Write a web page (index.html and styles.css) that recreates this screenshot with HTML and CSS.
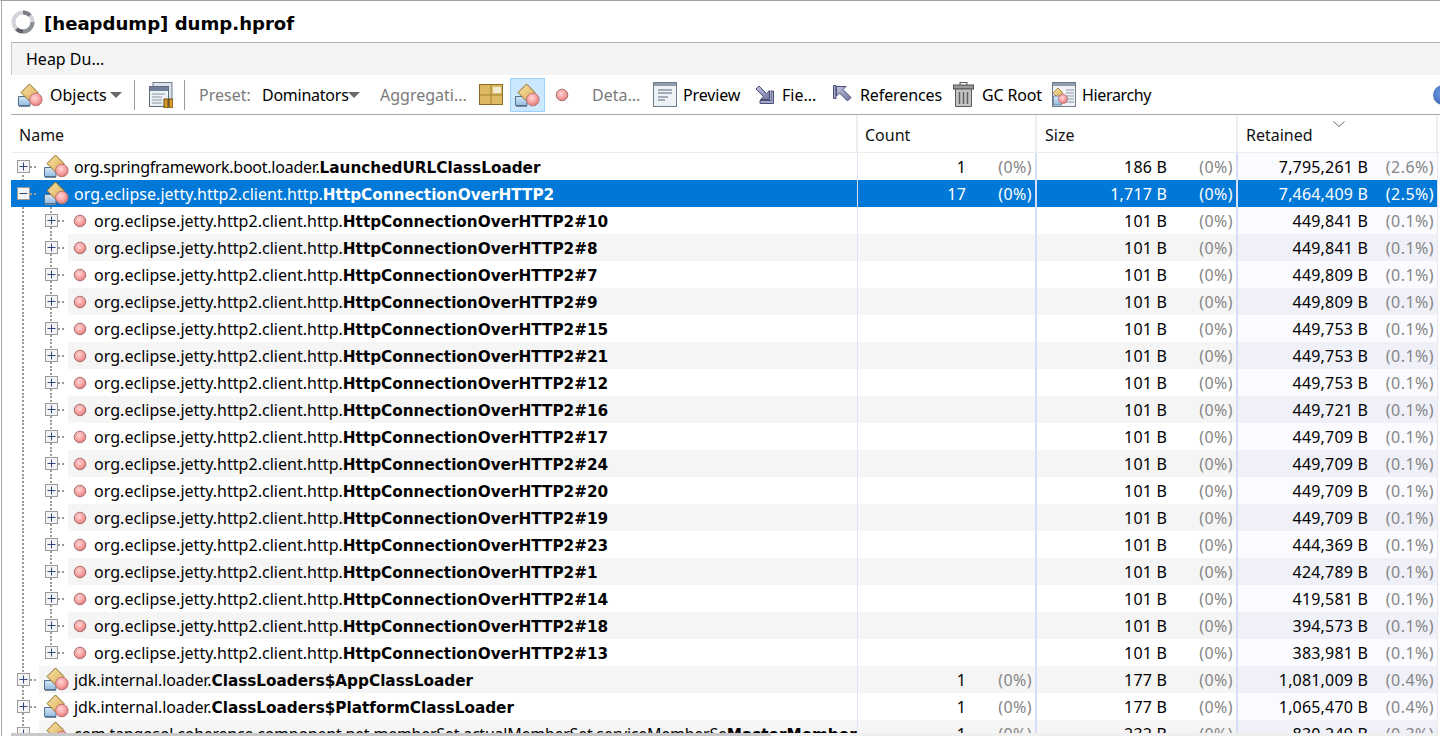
FILE: index.html
```html
<!DOCTYPE html>
<html lang="en">
<head>
<meta charset="utf-8">
<title>[heapdump] dump.hprof</title>
<link rel="stylesheet" href="styles.css">
</head>
<body>
<svg class="defs" width="0" height="0" aria-hidden="true">
  <defs>
    <linearGradient id="gold" x1="0" y1="0" x2="1" y2="1"><stop offset="0" stop-color="#f8e2a8"/><stop offset="1" stop-color="#dcae58"/></linearGradient>
    <linearGradient id="blue" x1="0" y1="0" x2="0" y2="1"><stop offset="0" stop-color="#d6e6f5"/><stop offset="1" stop-color="#93bde2"/></linearGradient>
    <radialGradient id="red" cx=".42" cy=".38" r=".65"><stop offset="0" stop-color="#ffd6d6"/><stop offset=".6" stop-color="#f8a0a0"/><stop offset="1" stop-color="#d87676"/></radialGradient>
    <linearGradient id="steel" x1="0" y1="0" x2="1" y2="1"><stop offset="0" stop-color="#c0c4de"/><stop offset="1" stop-color="#70749e"/></linearGradient>
    <symbol id="i-class" viewBox="0 0 25 24">
      <path d="M.5 13.500H12V22.500H.5Z" fill="url(#blue)" stroke="#50708e"/>
      <path d="M1 23.500H12" stroke="#7d8a96"/>
      <path d="M11.500 1 20 9.500 11.500 18 3 9.500Z" fill="url(#gold)" stroke="#8c6a22"/>
      <circle cx="17.800" cy="16.500" r="6.300" fill="url(#red)" stroke="#bb7474"/>
    </symbol>
    <symbol id="i-ball" viewBox="0 0 14 14">
      <circle cx="7" cy="7" r="5.800" fill="url(#red)" stroke="#a87474"/>
    </symbol>
    <symbol id="i-plus" viewBox="0 0 13 13">
      <rect x=".5" y=".5" width="12" height="12" fill="#f4f4f6" stroke="#9a9a9a"/>
      <path d="M2.500 6.500H10.500M6.500 2.500V10.500" stroke="#2f4a7a"/>
    </symbol>
    <symbol id="i-minus" viewBox="0 0 13 13">
      <rect x=".5" y=".5" width="12" height="12" fill="#f4f4f6" stroke="#9a9a9a"/>
      <path d="M2.500 6.500H10.500" stroke="#2f4a7a"/>
    </symbol>
  </defs>
</svg>

<div class="window">
  <header class="titlebar">
    <svg class="spinner" width="24" height="24" viewBox="0 0 24 24" aria-hidden="true">
      <circle cx="12" cy="12" r="9.500" fill="none" stroke="#d2d4d9" stroke-width="4"/>
      <path d="M12 2.500A9.500 9.500 0 0 1 19 5.500" fill="none" stroke="#7a7d85" stroke-width="4"/>
      <path d="M21.500 12A9.500 9.500 0 0 1 12 21.500" fill="none" stroke="#8e9199" stroke-width="4"/>
      <path d="M12 21.500A9.500 9.500 0 0 1 5.500 19" fill="none" stroke="#5f626b" stroke-width="4"/>
    </svg>
    <h1 class="title">[heapdump] dump.hprof</h1>
  </header>

  <div class="panel">
    <div class="tabstrip"><span class="tab">Heap Du...</span></div>

    <div class="toolbar">
      <svg class="tool-icon first" width="25" height="24"><use href="#i-class"/></svg>
      <span class="tool-text objects">Objects</span>
      <svg class="caret caret-obj" width="12" height="6" viewBox="0 0 12 6"><path d="M0 0H12L6 6Z" fill="#6a6a6a"/></svg>
      <span class="sep sep-a"></span>
      <svg class="tool-icon snap" width="24" height="26" viewBox="0 0 24 26" aria-hidden="true">
        <rect x="4" y=".5" width="19" height="19" fill="#dbe3ec" stroke="#6f7c8c"/>
        <rect x=".5" y="4.500" width="19" height="20" fill="#eef2f6" stroke="#5f6c7c"/>
        <rect x="1" y="5" width="18" height="4" fill="#6f8298"/>
        <path d="M3 12H16M3 15H13M3 18H13M3 21H13" stroke="#8a97a6"/>
        <rect x="15" y="17" width="4" height="9" fill="#d89a2c" stroke="#6a4a10"/>
        <rect x="20" y="17" width="4" height="9" fill="#d89a2c" stroke="#6a4a10"/>
      </svg>
      <span class="sep sep-b"></span>
      <span class="tool-text muted preset">Preset:</span>
      <span class="tool-text dominators">Dominators</span>
      <svg class="caret caret-dom" width="12" height="6" viewBox="0 0 12 6"><path d="M0 0H12L6 6Z" fill="#6a6a6a"/></svg>
      <span class="tool-text muted aggreg">Aggregati...</span>
      <svg class="tool-icon grid" width="24" height="21" viewBox="0 0 24 21" aria-hidden="true">
        <rect x=".5" y=".5" width="23" height="20" fill="#dcb962" stroke="#8a6c24"/>
        <path d="M12 1V20M1 11H23" stroke="#a5832f"/>
        <rect x="14" y="3" width="8" height="6" fill="#f3ecd4"/>
      </svg>
      <span class="toggle"><svg width="25" height="24"><use href="#i-class"/></svg></span>
      <svg class="tool-icon ball" width="14" height="14"><use href="#i-ball"/></svg>
      <span class="tool-text muted deta">Deta...</span>
      <svg class="tool-icon preview" width="24" height="25" viewBox="0 0 24 25" aria-hidden="true">
        <rect x=".5" y=".5" width="23" height="24" fill="#eef2f6" stroke="#6f7c8c"/>
        <rect x="1" y="1" width="22" height="3" fill="#8f9cab"/>
        <path d="M5 8H19M5 11H19M5 15H15M5 18H12" stroke="#8a97a6" stroke-width="1.500"/>
      </svg>
      <span class="tool-text previewt">Preview</span>
      <svg class="tool-icon fields" width="19" height="19" viewBox="0 0 19 19" aria-hidden="true">
        <path d="M16 6H18.500V18.500H5V15.500H16Z" fill="#a4a8c8" stroke="#4c4f78"/>
        <path d="M1 4 4 1 11.500 8.500 14.500 5.500V14.500H5.500L8.500 11.500Z" fill="url(#steel)" stroke="#4c4f78"/>
      </svg>
      <span class="tool-text fie">Fie...</span>
      <svg class="tool-icon refs" width="19" height="19" viewBox="0 0 19 19" aria-hidden="true">
        <path d="M.5 .5H3V13.500H.5Z" fill="#a4a8c8" stroke="#4c4f78"/>
        <path d="M3.500 1.500H13L10 4.500 18 12.500 14.500 16 6.500 8 3.500 11Z" fill="url(#steel)" stroke="#4c4f78"/>
      </svg>
      <span class="tool-text reft">References</span>
      <svg class="tool-icon trash" width="21" height="25" viewBox="0 0 21 25" aria-hidden="true">
        <rect x="7" y=".5" width="7" height="3" fill="none" stroke="#5a5a5a"/>
        <rect x=".5" y="3" width="20" height="4" fill="#9a9a9a" stroke="#4f4f4f"/>
        <path d="M2.500 7H18.500V24.500H2.500Z" fill="#c4c4c4" stroke="#5a5a5a"/>
        <path d="M6.500 10V22M10.500 10V22M14.500 10V22" stroke="#5f5f5f" stroke-width="1.500"/>
      </svg>
      <span class="tool-text gcroot">GC Root</span>
      <svg class="tool-icon hier" width="24" height="25" viewBox="0 0 24 25" aria-hidden="true">
        <rect x=".5" y=".5" width="23" height="24" fill="#f0f2f6" stroke="#6f7c8c"/>
        <rect x="1" y="1" width="22" height="3" fill="#8f9cab"/>
        <path d="M14 8H22M14 11H22M14 14H22M14 17H22M14 20H22" stroke="#8a97a6"/>
        <path d="M6 6 11 11 6 16 1 11Z" fill="url(#gold)" stroke="#8c6a22" stroke-width=".7"/>
        <rect x="1.500" y="14" width="8" height="9" fill="url(#blue)" stroke="#4a6a88" stroke-width=".7"/>
        <circle cx="11" cy="17" r="4.500" fill="url(#red)" stroke="#b56a6a" stroke-width=".7"/>
      </svg>
      <span class="tool-text hiert">Hierarchy</span>
      <span class="globe"></span>
    </div>

    <div class="thead">
      <div class="th th-name">Name</div>
      <div class="th th-count">Count</div>
      <div class="th th-size">Size</div>
      <div class="th th-ret">Retained
        <svg class="chev" width="12" height="6" viewBox="0 0 12 6"><path d="M.5 .5 6 5.500 11.500 .5" fill="none" stroke="#6a6a6a"/></svg>
      </div>
    </div>

    <div class="tbody">
      <div class="row">
        <div class="name"><span class="node line-d"><svg width="13" height="13"><use href="#i-plus"/></svg></span><span class="label top tight"><svg class="cls" width="25" height="24"><use href="#i-class"/></svg><span>org.springframework.boot.loader.<b>LaunchedURLClassLoader</b></span></span></div>
        <div class="cell c-count"><span>1</span><span class="pct">(0%)</span></div>
        <div class="cell c-size"><span>186 B</span><span class="pct">(0%)</span></div>
        <div class="cell c-ret"><span>7,795,261 B</span><span class="pct">(2.6%)</span></div>
      </div>
      <div class="row sel">
        <div class="name"><span class="node"><svg width="13" height="13"><use href="#i-minus"/></svg></span><span class="label top"><svg class="cls" width="25" height="24"><use href="#i-class"/></svg><span>org.eclipse.jetty.http2.client.http.<b>HttpConnectionOverHTTP2</b></span></span></div>
        <div class="cell c-count"><span>17</span><span class="pct">(0%)</span></div>
        <div class="cell c-size"><span>1,717 B</span><span class="pct">(0%)</span></div>
        <div class="cell c-ret"><span>7,464,409 B</span><span class="pct">(2.5%)</span></div>
      </div>
      <div class="row">
        <div class="name"><span class="guide"></span><span class="node"><svg width="13" height="13"><use href="#i-plus"/></svg></span><span class="label kid"><svg class="bl" width="14" height="14"><use href="#i-ball"/></svg><span>org.eclipse.jetty.http2.client.http.<b>HttpConnectionOverHTTP2#10</b></span></span></div>
        <div class="cell c-count"></div>
        <div class="cell c-size"><span>101 B</span><span class="pct">(0%)</span></div>
        <div class="cell c-ret"><span>449,841 B</span><span class="pct">(0.1%)</span></div>
      </div>
      <div class="row alt">
        <div class="name"><span class="guide"></span><span class="node"><svg width="13" height="13"><use href="#i-plus"/></svg></span><span class="label kid"><svg class="bl" width="14" height="14"><use href="#i-ball"/></svg><span>org.eclipse.jetty.http2.client.http.<b>HttpConnectionOverHTTP2#8</b></span></span></div>
        <div class="cell c-count"></div>
        <div class="cell c-size"><span>101 B</span><span class="pct">(0%)</span></div>
        <div class="cell c-ret"><span>449,841 B</span><span class="pct">(0.1%)</span></div>
      </div>
      <div class="row">
        <div class="name"><span class="guide"></span><span class="node"><svg width="13" height="13"><use href="#i-plus"/></svg></span><span class="label kid"><svg class="bl" width="14" height="14"><use href="#i-ball"/></svg><span>org.eclipse.jetty.http2.client.http.<b>HttpConnectionOverHTTP2#7</b></span></span></div>
        <div class="cell c-count"></div>
        <div class="cell c-size"><span>101 B</span><span class="pct">(0%)</span></div>
        <div class="cell c-ret"><span>449,809 B</span><span class="pct">(0.1%)</span></div>
      </div>
      <div class="row alt">
        <div class="name"><span class="guide"></span><span class="node"><svg width="13" height="13"><use href="#i-plus"/></svg></span><span class="label kid"><svg class="bl" width="14" height="14"><use href="#i-ball"/></svg><span>org.eclipse.jetty.http2.client.http.<b>HttpConnectionOverHTTP2#9</b></span></span></div>
        <div class="cell c-count"></div>
        <div class="cell c-size"><span>101 B</span><span class="pct">(0%)</span></div>
        <div class="cell c-ret"><span>449,809 B</span><span class="pct">(0.1%)</span></div>
      </div>
      <div class="row">
        <div class="name"><span class="guide"></span><span class="node"><svg width="13" height="13"><use href="#i-plus"/></svg></span><span class="label kid"><svg class="bl" width="14" height="14"><use href="#i-ball"/></svg><span>org.eclipse.jetty.http2.client.http.<b>HttpConnectionOverHTTP2#15</b></span></span></div>
        <div class="cell c-count"></div>
        <div class="cell c-size"><span>101 B</span><span class="pct">(0%)</span></div>
        <div class="cell c-ret"><span>449,753 B</span><span class="pct">(0.1%)</span></div>
      </div>
      <div class="row alt">
        <div class="name"><span class="guide"></span><span class="node"><svg width="13" height="13"><use href="#i-plus"/></svg></span><span class="label kid"><svg class="bl" width="14" height="14"><use href="#i-ball"/></svg><span>org.eclipse.jetty.http2.client.http.<b>HttpConnectionOverHTTP2#21</b></span></span></div>
        <div class="cell c-count"></div>
        <div class="cell c-size"><span>101 B</span><span class="pct">(0%)</span></div>
        <div class="cell c-ret"><span>449,753 B</span><span class="pct">(0.1%)</span></div>
      </div>
      <div class="row">
        <div class="name"><span class="guide"></span><span class="node"><svg width="13" height="13"><use href="#i-plus"/></svg></span><span class="label kid"><svg class="bl" width="14" height="14"><use href="#i-ball"/></svg><span>org.eclipse.jetty.http2.client.http.<b>HttpConnectionOverHTTP2#12</b></span></span></div>
        <div class="cell c-count"></div>
        <div class="cell c-size"><span>101 B</span><span class="pct">(0%)</span></div>
        <div class="cell c-ret"><span>449,753 B</span><span class="pct">(0.1%)</span></div>
      </div>
      <div class="row alt">
        <div class="name"><span class="guide"></span><span class="node"><svg width="13" height="13"><use href="#i-plus"/></svg></span><span class="label kid"><svg class="bl" width="14" height="14"><use href="#i-ball"/></svg><span>org.eclipse.jetty.http2.client.http.<b>HttpConnectionOverHTTP2#16</b></span></span></div>
        <div class="cell c-count"></div>
        <div class="cell c-size"><span>101 B</span><span class="pct">(0%)</span></div>
        <div class="cell c-ret"><span>449,721 B</span><span class="pct">(0.1%)</span></div>
      </div>
      <div class="row">
        <div class="name"><span class="guide"></span><span class="node"><svg width="13" height="13"><use href="#i-plus"/></svg></span><span class="label kid"><svg class="bl" width="14" height="14"><use href="#i-ball"/></svg><span>org.eclipse.jetty.http2.client.http.<b>HttpConnectionOverHTTP2#17</b></span></span></div>
        <div class="cell c-count"></div>
        <div class="cell c-size"><span>101 B</span><span class="pct">(0%)</span></div>
        <div class="cell c-ret"><span>449,709 B</span><span class="pct">(0.1%)</span></div>
      </div>
      <div class="row alt">
        <div class="name"><span class="guide"></span><span class="node"><svg width="13" height="13"><use href="#i-plus"/></svg></span><span class="label kid"><svg class="bl" width="14" height="14"><use href="#i-ball"/></svg><span>org.eclipse.jetty.http2.client.http.<b>HttpConnectionOverHTTP2#24</b></span></span></div>
        <div class="cell c-count"></div>
        <div class="cell c-size"><span>101 B</span><span class="pct">(0%)</span></div>
        <div class="cell c-ret"><span>449,709 B</span><span class="pct">(0.1%)</span></div>
      </div>
      <div class="row">
        <div class="name"><span class="guide"></span><span class="node"><svg width="13" height="13"><use href="#i-plus"/></svg></span><span class="label kid"><svg class="bl" width="14" height="14"><use href="#i-ball"/></svg><span>org.eclipse.jetty.http2.client.http.<b>HttpConnectionOverHTTP2#20</b></span></span></div>
        <div class="cell c-count"></div>
        <div class="cell c-size"><span>101 B</span><span class="pct">(0%)</span></div>
        <div class="cell c-ret"><span>449,709 B</span><span class="pct">(0.1%)</span></div>
      </div>
      <div class="row alt">
        <div class="name"><span class="guide"></span><span class="node"><svg width="13" height="13"><use href="#i-plus"/></svg></span><span class="label kid"><svg class="bl" width="14" height="14"><use href="#i-ball"/></svg><span>org.eclipse.jetty.http2.client.http.<b>HttpConnectionOverHTTP2#19</b></span></span></div>
        <div class="cell c-count"></div>
        <div class="cell c-size"><span>101 B</span><span class="pct">(0%)</span></div>
        <div class="cell c-ret"><span>449,709 B</span><span class="pct">(0.1%)</span></div>
      </div>
      <div class="row">
        <div class="name"><span class="guide"></span><span class="node"><svg width="13" height="13"><use href="#i-plus"/></svg></span><span class="label kid"><svg class="bl" width="14" height="14"><use href="#i-ball"/></svg><span>org.eclipse.jetty.http2.client.http.<b>HttpConnectionOverHTTP2#23</b></span></span></div>
        <div class="cell c-count"></div>
        <div class="cell c-size"><span>101 B</span><span class="pct">(0%)</span></div>
        <div class="cell c-ret"><span>444,369 B</span><span class="pct">(0.1%)</span></div>
      </div>
      <div class="row alt">
        <div class="name"><span class="guide"></span><span class="node"><svg width="13" height="13"><use href="#i-plus"/></svg></span><span class="label kid"><svg class="bl" width="14" height="14"><use href="#i-ball"/></svg><span>org.eclipse.jetty.http2.client.http.<b>HttpConnectionOverHTTP2#1</b></span></span></div>
        <div class="cell c-count"></div>
        <div class="cell c-size"><span>101 B</span><span class="pct">(0%)</span></div>
        <div class="cell c-ret"><span>424,789 B</span><span class="pct">(0.1%)</span></div>
      </div>
      <div class="row">
        <div class="name"><span class="guide"></span><span class="node"><svg width="13" height="13"><use href="#i-plus"/></svg></span><span class="label kid"><svg class="bl" width="14" height="14"><use href="#i-ball"/></svg><span>org.eclipse.jetty.http2.client.http.<b>HttpConnectionOverHTTP2#14</b></span></span></div>
        <div class="cell c-count"></div>
        <div class="cell c-size"><span>101 B</span><span class="pct">(0%)</span></div>
        <div class="cell c-ret"><span>419,581 B</span><span class="pct">(0.1%)</span></div>
      </div>
      <div class="row alt">
        <div class="name"><span class="guide"></span><span class="node"><svg width="13" height="13"><use href="#i-plus"/></svg></span><span class="label kid"><svg class="bl" width="14" height="14"><use href="#i-ball"/></svg><span>org.eclipse.jetty.http2.client.http.<b>HttpConnectionOverHTTP2#18</b></span></span></div>
        <div class="cell c-count"></div>
        <div class="cell c-size"><span>101 B</span><span class="pct">(0%)</span></div>
        <div class="cell c-ret"><span>394,573 B</span><span class="pct">(0.1%)</span></div>
      </div>
      <div class="row">
        <div class="name"><span class="guide"></span><span class="node last"><svg width="13" height="13"><use href="#i-plus"/></svg></span><span class="label kid"><svg class="bl" width="14" height="14"><use href="#i-ball"/></svg><span>org.eclipse.jetty.http2.client.http.<b>HttpConnectionOverHTTP2#13</b></span></span></div>
        <div class="cell c-count"></div>
        <div class="cell c-size"><span>101 B</span><span class="pct">(0%)</span></div>
        <div class="cell c-ret"><span>383,981 B</span><span class="pct">(0.1%)</span></div>
      </div>
      <div class="row alt">
        <div class="name"><span class="node"><svg width="13" height="13"><use href="#i-plus"/></svg></span><span class="label top tight-s"><svg class="cls" width="25" height="24"><use href="#i-class"/></svg><span>jdk.internal.loader.<b>ClassLoaders$AppClassLoader</b></span></span></div>
        <div class="cell c-count"><span>1</span><span class="pct">(0%)</span></div>
        <div class="cell c-size"><span>177 B</span><span class="pct">(0%)</span></div>
        <div class="cell c-ret"><span>1,081,009 B</span><span class="pct">(0.4%)</span></div>
      </div>
      <div class="row">
        <div class="name"><span class="node"><svg width="13" height="13"><use href="#i-plus"/></svg></span><span class="label top tight-s"><svg class="cls" width="25" height="24"><use href="#i-class"/></svg><span>jdk.internal.loader.<b>ClassLoaders$PlatformClassLoader</b></span></span></div>
        <div class="cell c-count"><span>1</span><span class="pct">(0%)</span></div>
        <div class="cell c-size"><span>177 B</span><span class="pct">(0%)</span></div>
        <div class="cell c-ret"><span>1,065,470 B</span><span class="pct">(0.4%)</span></div>
      </div>
      <div class="row alt">
        <div class="name"><span class="node"><svg width="13" height="13"><use href="#i-plus"/></svg></span><span class="label top tight"><svg class="cls" width="25" height="24"><use href="#i-class"/></svg><span>com.tangosol.coherence.component.net.memberSet.actualMemberSet.serviceMemberSe<b>MasterMemberSet</b></span></span></div>
        <div class="cell c-count"><span>1</span><span class="pct">(0%)</span></div>
        <div class="cell c-size"><span>232 B</span><span class="pct">(0%)</span></div>
        <div class="cell c-ret"><span>830,249 B</span><span class="pct">(0.3%)</span></div>
      </div>
    </div>
    <div class="hscroll"><span class="hthumb"></span></div>
  </div>
</div>
</body>
</html>
```
FILE: styles.css
```css
* { box-sizing: border-box; }
html, body { margin: 0; height: 736px; overflow: hidden; background: #fff; }
body { font-family: "Noto Sans", "Liberation Sans", sans-serif; font-size: 16px; color: #000; }
.defs { display: block; }

.window {
  height: 736px;
  border-top: 1px solid #a0a0a0;
  border-left: 1px solid transparent;
  display: flex;
  flex-direction: column;
  box-shadow: inset 1px 0 0 #a8a8a8;
}
.titlebar { height: 41px; flex: none; display: flex; align-items: center; padding-left: 10px; }
.spinner { flex: none; }
.title { margin: 4px 0 0 9px; font: bold 18.080px "DejaVu Sans", sans-serif; line-height: 24px; }

.panel { flex: 1; min-height: 0; margin-left: 10px; display: flex; flex-direction: column; }
.tabstrip { height: 33px; flex: none; background: #f4f4f4; border-top: 1px solid #b4b4b4; border-left: 1px solid #c8c8c8; display: flex; align-items: center; padding-left: 14px; }
.tab { line-height: 30px; }

.toolbar { height: 40px; flex: none; border-bottom: 1px solid #a8a8a8; display: flex; align-items: center; white-space: nowrap; overflow: hidden; }
.tool-text { line-height: 22px; flex: none; }
.muted { color: #7a7a7a; }
.tool-icon, .caret { flex: none; }
.first { margin-left: 7px; }
.objects { margin-left: 7px; width: 56px; }
.caret-obj { margin-left: 4px; }
.sep { flex: none; width: 1px; height: 30px; background: #9a9a9a; }
.sep-a { margin-left: 12px; }
.snap { margin-left: 14px; }
.sep-b { margin-left: 11px; }
.preset { margin-left: 14px; width: 52px; }
.dominators { margin-left: 11px; width: 85px; letter-spacing: -.25px; }
.caret-dom { margin-left: 1px; }
.aggreg { margin-left: 20px; width: 86px; }
.grid { margin-left: 13px; }
.toggle { flex: none; margin-left: 7px; width: 35px; height: 34px; background: #cce8ff; border: 1px solid #99d1ff; display: flex; align-items: center; justify-content: center; }
.ball { margin-left: 10px; }
.deta { margin-left: 23px; width: 51px; }
.preview { margin-left: 10px; }
.previewt { margin-left: 6px; width: 57px; letter-spacing: -.15px; }
.fields { margin-left: 15px; }
.fie { margin-left: 8px; width: 37px; }
.refs { margin-left: 14px; }
.reft { margin-left: 8px; width: 82px; letter-spacing: -.1px; }
.trash { margin-left: 11px; }
.gcroot { margin-left: 8px; width: 60px; letter-spacing: -.15px; }
.hier { margin-left: 10px; }
.hiert { margin-left: 6px; width: 70px; letter-spacing: -.35px; }
.globe { flex: none; margin-left: 281px; width: 20px; height: 20px; border-radius: 50%; background: radial-gradient(circle at 40% 40%, #6f9be0, #2c55a8); }

.thead { height: 38px; flex: none; display: flex; border-bottom: 1px solid #ececec; color: #111; }
.th { padding-left: 8px; line-height: 40px; border-right: 2px solid #eeeeee; flex: none; }
.th-name { width: 847px; }
.th-count { width: 179px; padding-left: 7px; }
.th-size { width: 201px; padding-left: 8px; }
.th-ret { width: 200px; padding-left: 8px; display: flex; align-items: flex-start; }
.chev { flex: none; margin: 6px 0 0 20px; }

.tbody { flex: 1; min-height: 0; overflow: hidden; }
.row { height: 27px; display: flex; width: 1427px; }
.name { width: 847px; flex: none; display: flex; overflow: hidden; white-space: nowrap; border-right: 1px solid #e0e4f4; }
.guide { flex: none; width: 28px; height: 27px; background: repeating-linear-gradient(to bottom, #9a9a9a 0 2px, transparent 2px 4px) 11px 0 / 2px 100% no-repeat; }
.node {
  flex: none; width: 28px; height: 27px;
  display: flex; align-items: center; padding-left: 6px;
  background:
    repeating-linear-gradient(to bottom, #9a9a9a 0 2px, transparent 2px 4px) 11px 0 / 2px 100% no-repeat,
    repeating-linear-gradient(to right, #9a9a9a 0 2px, transparent 2px 4px) 19px 13px / 8px 2px no-repeat;
}
.node.last { background-size: 2px 14px, 8px 2px; }
.node.line-d { background-position: 11px 14px, 19px 13px; }
.label { flex: 1; min-width: 0; height: 27px; display: flex; align-items: flex-start; line-height: 29px; overflow: hidden; letter-spacing: .03px; }
.label.top { padding-left: 5px; }
.label.kid { margin-left: 1px; padding-left: 5px; }
.label.tight { letter-spacing: -.25px; }
.label.tight-s { letter-spacing: -.1px; }
.cls { flex: none; margin: 1px 5px 0 0; }
.bl { flex: none; margin: 7px 7px 0 0; }
.label b { font: bold 15.250px "DejaVu Sans", sans-serif; letter-spacing: 0; }
.cell { flex: none; display: flex; justify-content: flex-end; align-items: flex-start; padding-right: 3px; border-right: 2px solid #d6def8; line-height: 29px; letter-spacing: .18px; height: 27px; }
.c-count { width: 179px; }
.c-size { width: 201px; }
.c-ret { width: 200px; background: #fbfbff; border-right: 1px solid #e8e8f0; padding-right: 3px; }
.pct { width: 66px; text-align: right; color: #858585; flex: none; letter-spacing: .45px; }
.row.alt .cell, .row.alt .label { background-color: #f5f5f5; }
.row.alt .c-ret { background-color: #eff0f8; }
.row.sel { background: #0078d7; color: #fff; }
.row.sel .cell, .row.sel .c-ret { background: #0078d7; border-right-color: #d6def8; }
.row.sel .pct { color: #fff; }
.row.sel .name { border-right-color: #d6def8; }
.row.sel .node { background-image: none, repeating-linear-gradient(to right, #9a9a9a 0 2px, transparent 2px 4px); }

.hscroll { height: 3px; flex: none; background: #efefef; width: 1427px; }
.hthumb { display: block; height: 3px; width: 760px; background: #c8c8c8; }
```
